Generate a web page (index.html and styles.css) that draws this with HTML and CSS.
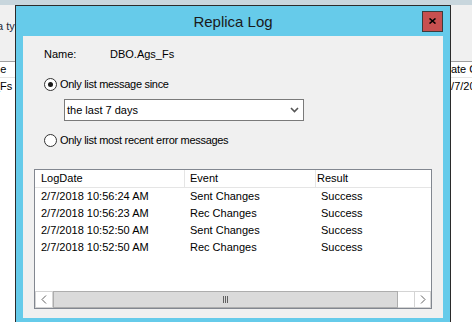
FILE: index.html
```html
<!DOCTYPE html>
<html lang="en">
<head>
    <meta charset="UTF-8">
    <meta name="viewport" content="width=device-width, initial-scale=1.0">
    <title>Replica Log</title>
    <link rel="stylesheet" href="styles.css">
</head>
<body>
    <div class="topstrip"></div>
    <div class="desk">
        <div class="bgpane left">
            <div class="bglabel"><span class="clip-label">Data type</span></div>
            <div class="bglist">
                <div class="bghead"><span class="clip-head">Name</span></div>
                <div class="bgrow"><span class="clip-row">DBO.Ags_Fs</span></div>
            </div>
        </div>

        <div class="dialog">
            <div class="titlebar">
                <span></span>
                <div class="title">Replica Log</div>
                <button class="close" title="Close">
                    <svg width="7" height="6" viewBox="0 0 7 6">
                        <path d="M0.5 0.5 L6.5 5.5 M6.5 0.5 L0.5 5.5" stroke="#000" stroke-width="1.6" fill="none"/>
                    </svg>
                </button>
            </div>
            <div class="client">
                <div class="name-row">
                    <span class="name-label">Name:</span>
                    <span>DBO.Ags_Fs</span>
                </div>
                <label class="radio">
                    <span class="radio-box checked"></span>
                    Only list message since
                </label>
                <div class="combo">
                    <span>the last 7 days</span>
                    <svg width="9" height="6" viewBox="0 0 9 6">
                        <path d="M1 1 L4.5 4.5 L8 1" stroke="#555" stroke-width="1.6" fill="none"/>
                    </svg>
                </div>
                <label class="radio second">
                    <span class="radio-box"></span>
                    Only list most recent error messages
                </label>

                <div class="listview">
                    <div class="lv-head">
                        <div class="col-date">LogDate</div>
                        <div class="col-event">Event</div>
                        <div class="col-result">Result</div>
                    </div>
                    <div class="lv-body">
                        <div class="lv-row"><div>2/7/2018 10:56:24 AM</div><div>Sent Changes</div><div>Success</div></div>
                        <div class="lv-row"><div>2/7/2018 10:56:23 AM</div><div>Rec Changes</div><div>Success</div></div>
                        <div class="lv-row"><div>2/7/2018 10:52:50 AM</div><div>Sent Changes</div><div>Success</div></div>
                        <div class="lv-row"><div>2/7/2018 10:52:50 AM</div><div>Rec Changes</div><div>Success</div></div>
                    </div>
                    <div class="hscroll">
                        <div class="sb-btn">
                            <svg width="6" height="9" viewBox="0 0 6 9"><path d="M5 0.5 L1 4.5 L5 8.5" stroke="#606060" fill="none"/></svg>
                        </div>
                        <div class="sb-thumb">
                            <svg width="5" height="7" viewBox="0 0 5 7"><path d="M0.5 0 V7 M2.5 0 V7 M4.5 0 V7" stroke="#606060"/></svg>
                        </div>
                        <div class="sb-track"></div>
                        <div class="sb-btn right">
                            <svg width="6" height="9" viewBox="0 0 6 9"><path d="M1 0.5 L5 4.5 L1 8.5" stroke="#606060" fill="none"/></svg>
                        </div>
                    </div>
                </div>
            </div>
        </div>

        <div class="bgpane right">
            <div class="bglabel"></div>
            <div class="bglist">
                <div class="bghead"><span class="clip-head-r">Date Created</span></div>
                <div class="bgrow"><span class="clip-row-r">2/7/2018 10:56:24 AM</span></div>
            </div>
        </div>
    </div>
</body>
</html>
```

FILE: styles.css
```css
* {
    box-sizing: border-box;
}
body {
    margin: 0;
    width: 472px;
    height: 322px;
    overflow: hidden;
    font-family: "Liberation Sans", Arial, sans-serif;
    font-size: 11px;
    color: #000;
    background: #f0f0f0;
}
.topstrip {
    height: 5px;
    background: #c8d6dd;
}
.desk {
    display: flex;
    height: 317px;
}

/* window behind the dialog */
.bgpane {
    width: 15px;
    flex-shrink: 0;
    overflow: hidden;
    display: flex;
    flex-direction: column;
    white-space: nowrap;
}
.bgpane.right {
    width: 21px;
}
.bglabel {
    height: 56px;
    padding-top: 15px;
    line-height: 13px;
    color: #1c2a3a;
}
.clip-label {
    display: inline-block;
    margin-left: -20px;
}
.bglist {
    flex: 1;
    background: #fff;
    border-top: 1px solid #a0a0a0;
}
.bghead {
    height: 16px;
    line-height: 15px;
    border-bottom: 1px solid #e5e5e5;
}
.bgrow {
    height: 17px;
    line-height: 17px;
}
.clip-head {
    display: inline-block;
    margin-left: -23px;
}
.clip-row {
    display: inline-block;
    margin-left: -52px;
}
.clip-head-r {
    display: inline-block;
    margin-left: -8px;
}
.clip-row-r {
    display: inline-block;
    margin-left: -6px;
}

/* dialog */
.dialog {
    width: 436px;
    flex-shrink: 0;
    display: flex;
    flex-direction: column;
    background: #66cbea;
    border: 1px solid #2b2b2b;
    border-bottom: none;
    padding: 0 7px 4px;
}
.titlebar {
    height: 30px;
    display: grid;
    grid-template-columns: 1fr auto 1fr;
    align-items: center;
}
.title {
    font-size: 15px;
    color: #1a1a1a;
}
.close {
    justify-self: end;
    width: 21px;
    height: 21px;
    padding: 0;
    border: 1px solid #3c3c3c;
    background: #c75050;
    display: flex;
    align-items: center;
    justify-content: center;
}
.client {
    flex: 1;
    background: #f0f0f0;
    display: flex;
    flex-direction: column;
    align-items: flex-start;
    padding-top: 12px;
    line-height: 13px;
}
.name-row {
    margin-left: 21px;
    display: flex;
}
.name-label {
    width: 66px;
}
.radio {
    margin: 17px 0 0 21px;
    height: 13px;
    display: flex;
    align-items: center;
    gap: 3px;
    letter-spacing: -0.3px;
}
.radio.second {
    margin-top: 13px;
}
.radio-box {
    width: 13px;
    height: 13px;
    border: 1px solid #333;
    border-radius: 50%;
    background: #fff;
    display: flex;
    align-items: center;
    justify-content: center;
}
.radio-box.checked::after {
    content: "";
    width: 5px;
    height: 5px;
    border-radius: 50%;
    background: #1a1a1a;
}
.combo {
    margin: 8px 0 0 41px;
    width: 240px;
    height: 22px;
    border: 1px solid #7a7a7a;
    background: #fff;
    padding: 0 4px 0 2px;
    display: flex;
    align-items: center;
    justify-content: space-between;
}

/* list view */
.listview {
    margin: 22px 0 0 11px;
    width: 398px;
    height: 140px;
    border: 1px solid #828790;
    background: #fff;
    display: flex;
    flex-direction: column;
}
.lv-head, .lv-row {
    display: grid;
    grid-template-columns: 150px 131px 1fr;
    white-space: nowrap;
}
.lv-head {
    height: 18px;
    line-height: 17px;
    border-bottom: 1px solid #e5e5e5;
}
.lv-head .col-date {
    padding-left: 6px;
    border-right: 1px solid #e5e5e5;
}
.lv-head .col-event {
    padding-left: 5px;
    border-right: 1px solid #e5e5e5;
}
.lv-head .col-result {
    padding-left: 1px;
}
.lv-body {
    flex: 1;
}
.lv-row {
    height: 17px;
    line-height: 17px;
}
.lv-row div:first-child {
    padding-left: 6px;
}
.lv-row div {
    padding-left: 5px;
}
.hscroll {
    height: 17px;
    display: flex;
    background: #fff;
}
.sb-btn {
    width: 18px;
    border: 1px solid #d4d4d4;
    display: flex;
    align-items: center;
    justify-content: center;
}
.sb-btn.right {
    width: 17px;
}
.sb-thumb {
    width: 345px;
    background: #dadada;
    border: 1px solid #adadad;
    display: flex;
    align-items: center;
    justify-content: center;
}
.sb-track {
    flex: 1;
    border-top: 1px solid #d4d4d4;
    border-bottom: 1px solid #d4d4d4;
}
```
